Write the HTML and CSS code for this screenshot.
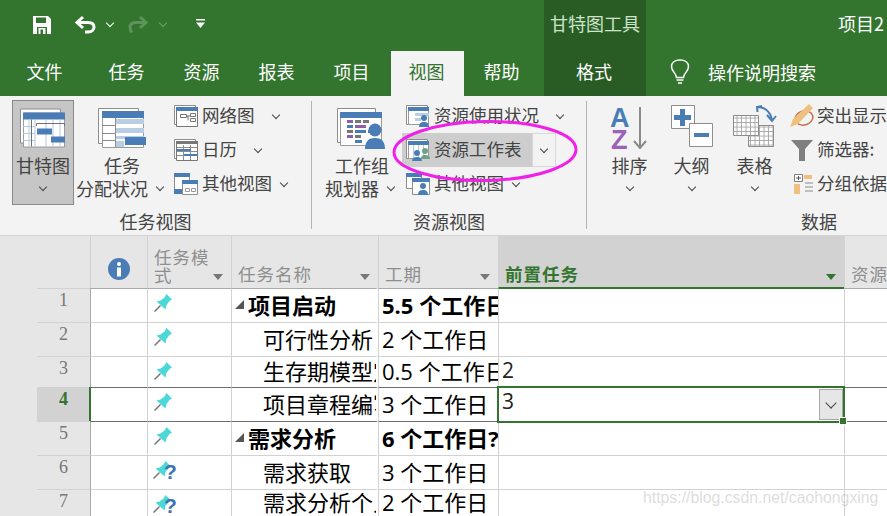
FILE: index.html
```html
<!DOCTYPE html>
<html lang="zh">
<head>
<meta charset="utf-8">
<title>甘特图工具</title>
<link rel="stylesheet" href="styles.css">
</head>
<body>
<div class="app">
  <header class="top">
    <div class="titlebar">
      <div class="qat">
        <svg class="q-save" width="20" height="20" viewBox="0 0 20 20"><path fill="#fff" d="M1 1h15l3 3v15H1z"/><path fill="#33752f" d="M4 2.500h10v5.500H4zM5 12h10v7H5z"/><path fill="#fff" d="M6.500 13h7v6h-7z"/><path fill="#33752f" d="M8.500 14.500h2.500v4.500H8.500z"/></svg>
        <svg class="q-undo" width="22" height="20" viewBox="0 0 22 20"><path fill="none" stroke="#fff" stroke-width="3" d="M9 2L3 7.500l6 5.500M3 7.500h11c4 0 6 2 6 4.500s-2 5-6 5h-3"/></svg>
        <span class="chev light q-c1"></span>
        <svg class="q-redo" width="22" height="20" viewBox="0 0 22 20"><path fill="none" stroke="#5d9459" stroke-width="3" d="M13 2l6 5.500-6 5.500M19 7.500H9c-4 0-6 2-6 5s1 4 2 5"/></svg>
        <span class="chev dim q-c2"></span>
        <svg class="q-more" width="9" height="9" viewBox="0 0 9 9"><path fill="#fff" d="M0 0h9v1.500H0zM0 3.500h9L4.500 9z"/></svg>
      </div>
      <div class="ctx-title">甘特图工具</div>
      <div class="doc-title">项目2</div>
    </div>
    <nav class="tabs">
      <span class="tab t-file">文件</span>
      <span class="tab t-std">任务</span>
      <span class="tab t-std">资源</span>
      <span class="tab t-std">报表</span>
      <span class="tab t-proj">项目</span>
      <span class="tab t-active">视图</span>
      <span class="tab t-help">帮助</span>
      <span class="tab t-ctx">格式</span>
      <span class="tell">
        <svg width="20" height="26" viewBox="0 0 20 26"><path fill="none" stroke="#fff" stroke-width="1.500" d="M6.500 18.500c0-4-5-6-5-11C1.500 3.500 5 1 10 1s8.500 2.500 8.500 6.500c0 5-5 7-5 11zM6.500 21h7M8 24h4"/></svg>
        <span>操作说明搜索</span>
      </span>
    </nav>
  </header>

  <section class="ribbon">
    <div class="group g-task">
      <div class="group-body">
        <div class="big big-gantt pressed">
          <svg width="46" height="40" viewBox="0 0 46 40"><path fill="#fff" stroke="#8d8d8d" d="M.500.500h40v34H.500z"/><path fill="#fff" stroke="#9a9a9a" d="M3.500 4.500h41v34h-41z"/><path fill="#4a7db5" d="M3 4h42v7H3z"/><path fill="none" stroke="#b7c9dd" d="M9 11v27M15 11v27M40 11v27M33 11v27M26 11v27M3 18h12M3 25h12M3 32h12"/><path fill="none" stroke="#707070" d="M11.500 11v27M16.500 17.500v-2.500h28v2.500"/><path fill="#4a7db5" d="M17 20h15v6H17zM31 28h14v6H31z"/></svg>
          <span class="lbl">甘特图</span>
          <span class="lbl"><i class="chev"></i></span>
        </div>
        <div class="big big-usage">
          <svg width="48" height="41" viewBox="0 0 48 41"><path fill="#fff" stroke="#8d8d8d" d="M.500.500h40v35H.500z"/><path fill="#fff" stroke="#9a9a9a" d="M4.500 3.500h41v36h-41z"/><path fill="#4a7db5" d="M4 3h42v7H4z"/><path fill="#b9cde3" d="M18 11h28v5H18zM18 20h28v5H18zM18 28h28v3H18zM18 33h8v6h-8z"/><path fill="none" stroke="#8d8d8d" d="M17.500 10v29M4 17.500h13M4 25.500h13M4 32.500h13"/><path fill="#4a7db5" d="M27 29h21v8H27z"/></svg>
          <span class="lbl">任务</span>
          <span class="lbl lbl-w">分配状况<i class="chev c-inline"></i></span>
        </div>
        <div class="small-col">
          <div class="small">
            <svg width="24" height="22" viewBox="0 0 24 22"><path fill="#fff" stroke="#8d8d8d" d="M.500.500h21v19H.500z"/><path fill="#fff" stroke="#777" d="M2.500 2.500h21v19h-21z"/><path fill="#4a7db5" d="M2 2h22v4H2z"/><path fill="none" stroke="#777" d="M6.500 9.500h6v3h-6zM16.500 8.500h5v3h-5zM16.500 13.500h5v3h-5zM12 11h4.500M14 10.500v5"/></svg>
            <span>网络图</span><i class="chev gap-wide"></i>
          </div>
          <div class="small">
            <svg width="24" height="22" viewBox="0 0 24 22"><path fill="#fff" stroke="#8d8d8d" d="M.500.500h21v19H.500z"/><path fill="#fff" stroke="#777" d="M2.500 2.500h21v19h-21z"/><path fill="#777" d="M2 2h22v3H2z"/><path fill="none" stroke="#8d8d8d" d="M3 8.500h20M3 12.500h20M3 16.500h20M9.500 6v15M16.500 6v15"/><path fill="#4a7db5" d="M3 10h14v2H3zM10 15h13v2H10z"/></svg>
            <span>日历</span><i class="chev gap-wide"></i>
          </div>
          <div class="small">
            <svg width="24" height="22" viewBox="0 0 24 22"><path fill="#fff" stroke="#8d8d8d" d="M.500.500h15v17H.500z"/><path fill="#4a7db5" d="M0 0h16v4H0zM0 16h11v5H0z"/><path fill="#fff" stroke="#8d8d8d" d="M8.500 8.500h15v13h-15z"/><path fill="#4a7db5" d="M8 7h16v4H8z"/><path fill="none" stroke="#9a9a9a" d="M11.500 15.500h4v3h-4zM17.500 15.500h4v3h-4z"/></svg>
            <span>其他视图</span><i class="chev gap-tight"></i>
          </div>
        </div>
      </div>
      <div class="group-label">任务视图</div>
    </div>
    <div class="sep"></div>

    <div class="group g-res">
      <div class="group-body">
        <div class="big big-team">
          <svg width="50" height="41" viewBox="0 0 50 41"><path fill="#fff" stroke="#8d8d8d" d="M.500.500h38v34H.500z"/><path fill="#fff" stroke="#9a9a9a" d="M3.500 4.500h41v33h-41z"/><path fill="#4a7db5" d="M3 4h42v6H3z"/><path fill="#8f5fae" d="M10 12h6v3h-6zM18 17h11v3H18zM10 27h6v3h-6z"/><path fill="#777" d="M18 12h6v3h-6zM26 12h6v3h-6zM10 22h6v3h-6zM18 27h6v3h-6z"/><path fill="#4a7db5" d="M10 17h6v3h-6zM18 22h11v3H18zM31 22h6v3h-6zM18 32h7v3h-7z"/><circle cx="38" cy="22" r="6.500" fill="#4a7db5"/><path fill="#4a7db5" d="M28 41c0-8 4-11 10-11s10 3 10 11z"/></svg>
          <span class="lbl">工作组</span>
          <span class="lbl lbl-w">规划器<i class="chev c-inline"></i></span>
        </div>
        <div class="small-col">
          <div class="small">
            <svg width="24" height="22" viewBox="0 0 24 22"><path fill="#fff" stroke="#8d8d8d" d="M.500.500h21v19H.500z"/><path fill="#fff" stroke="#9a9a9a" d="M2.500 2.500h20v17h-20z"/><path fill="#4a7db5" d="M2 2h21v4H2z"/><path fill="#b9cde3" d="M9 8h14v3H9zM9 13h6v3H9z"/><circle cx="18" cy="13" r="3" fill="#4a7db5"/><path fill="#4a7db5" d="M13 22c0-4 2-5 5-5s5 1 5 5z"/></svg>
            <span>资源使用状况</span><i class="chev gap-wide"></i>
          </div>
          <div class="small active-btn">
            <svg width="24" height="22" viewBox="0 0 24 22"><path fill="#fff" stroke="#8d8d8d" d="M.500.500h21v19H.500z"/><path fill="#fff" stroke="#9a9a9a" d="M2.500 2.500h20v17h-20z"/><path fill="#4a7db5" d="M2 2h21v4H2z"/><path fill="none" stroke="#b7c9dd" d="M7.500 6v14M12.500 6v14M17.500 6v14"/><circle cx="11" cy="14" r="3" fill="#4a7db5"/><path fill="#4a7db5" d="M6 23c0-4 2-5 5-5s5 1 5 5z"/><circle cx="19" cy="12" r="3" fill="#6fa08a"/><path fill="#6fa08a" d="M15 20c0-3 1-4 4-4s5 1 5 4z"/></svg>
            <span>资源工作表</span>
            <i class="split"><i class="chev"></i></i>
          </div>
          <div class="small">
            <svg width="24" height="22" viewBox="0 0 24 22"><path fill="#fff" stroke="#8d8d8d" d="M.500.500h15v15H.500z"/><path fill="#4a7db5" d="M0 0h16v4H0z"/><path fill="#fff" stroke="#8d8d8d" d="M6.500 6.500h17v15h-17z"/><path fill="#4a7db5" d="M6 5h18v4H6z"/><circle cx="17" cy="13" r="3" fill="#4a7db5"/><path fill="#4a7db5" d="M12 22c0-4 2-5 5-5s5 1 5 5z"/></svg>
            <span>其他视图</span><i class="chev gap-tight"></i>
          </div>
        </div>
      </div>
      <div class="group-label">资源视图</div>
    </div>
    <div class="sep"></div>

    <div class="group g-data">
      <div class="group-body">
        <div class="big big-sort">
          <svg width="40" height="44" viewBox="0 0 40 44"><text class="az a" x="0" y="22">A</text><text class="az z" x="1" y="44">Z</text><path fill="none" stroke="#8a8a8a" stroke-width="2" d="M30 2v41M24 36l6 7 6-7"/></svg>
          <span class="lbl">排序</span>
          <span class="lbl"><i class="chev"></i></span>
        </div>
        <div class="big big-outline">
          <svg width="42" height="44" viewBox="0 0 42 44"><path fill="#fff" stroke="#8d8d8d" d="M.500.500h23v23H.500z"/><path fill="#4a7db5" d="M9 4h5v6h6v5h-6v6H9v-6H3v-5h6z"/><path fill="#fff" stroke="#8d8d8d" d="M18.500 18.500h23v23h-23z"/><path fill="#4a7db5" d="M23 28h15v4H23z"/></svg>
          <span class="lbl">大纲</span>
          <span class="lbl"><i class="chev"></i></span>
        </div>
        <div class="big big-table">
          <svg width="44" height="44" viewBox="0 0 44 44"><defs><pattern id="gridp" width="4.500" height="4.500" patternUnits="userSpaceOnUse"><path fill="none" stroke="#a8a8a8" d="M4 0v5M0 4h5"/></pattern></defs><path fill="#fff" stroke="#8d8d8d" d="M15.500 20.500h25v21h-25z"/><path fill="url(#gridp)" d="M16 21h24v20H16z"/><path fill="#fff" stroke="#8d8d8d" d="M.500 10.500h25v20h-25z"/><path fill="url(#gridp)" d="M1 11h24v19H1z"/><path fill="none" stroke="#4a7db5" stroke-width="2" d="M25 2c5 0 12 3 14 13M24.500 7l-.500-5 5-1M34 10l5 6 4-5"/></svg>
          <span class="lbl">表格</span>
          <span class="lbl"><i class="chev"></i></span>
        </div>
        <div class="small-col">
          <div class="small">
            <svg width="24" height="24" viewBox="0 0 24 24"><ellipse cx="14" cy="14" rx="9" ry="7" fill="none" stroke="#c9694a" stroke-width="1.500" transform="rotate(-15 14 14)"/><path fill="#eec17e" d="M0 23l3-8L19 0l4 4L8 20z"/></svg>
            <span>突出显示</span>
          </div>
          <div class="small">
            <svg width="24" height="22" viewBox="0 0 24 22"><path fill="#7f7f7f" d="M1 1h22l-8 9v12h-6V10z"/></svg>
            <span>筛选器:</span>
          </div>
          <div class="small s-group">
            <svg width="20" height="20" viewBox="0 0 20 20"><path fill="#fff" stroke="#7f7f7f" d="M.500.500h8v7h-8z"/><path stroke="#555" fill="none" d="M2 4h5M4.500 2v4"/><path fill="#eec17e" d="M0 10h6v10H0zM10 1h8v4h-8z"/><path stroke="#8a8a8a" fill="none" d="M11 9h8M11 13h8M11 17h8"/></svg>
            <span>分组依据</span>
          </div>
        </div>
      </div>
      <div class="group-label">数据</div>
    </div>
  </section>

  <section class="sheet">
    <div class="h blank"></div>
    <div class="h h-info">
      <svg width="22" height="22" viewBox="0 0 22 22"><circle cx="11" cy="11" r="11" fill="#4a7db5"/><circle cx="11" cy="6" r="2" fill="#fff"/><path fill="#fff" d="M9 9.500h4v9H9z"/></svg>
    </div>
    <div class="h h-mode"><span>任务模式</span><i class="tri"></i></div>
    <div class="h"><span>任务名称</span><i class="tri"></i></div>
    <div class="h"><span>工期</span><i class="tri"></i></div>
    <div class="h h-sel"><span>前置任务</span><i class="tri"></i></div>
    <div class="h"><span>资源</span></div>

    <div class="num">1</div><div class="c lead t1"></div><div class="c ic t1"><svg class="pin" width="18" height="18" viewBox="0 0 18 18"><use href="#pin"/></svg></div>
    <div class="c nm b t1"><i class="caret"></i>项目启动</div><div class="c du b t1">5.5 个工作日?</div><div class="c pr first"></div><div class="c t1"></div>

    <div class="num">2</div><div class="c lead"></div><div class="c ic"><svg class="pin" width="18" height="18" viewBox="0 0 18 18"><use href="#pin"/></svg></div>
    <div class="c nm sub">可行性分析</div><div class="c du">2 个工作日</div><div class="c pr"></div><div class="c"></div>

    <div class="num">3</div><div class="c lead"></div><div class="c ic"><svg class="pin" width="18" height="18" viewBox="0 0 18 18"><use href="#pin"/></svg></div>
    <div class="c nm sub">生存期模型定义</div><div class="c du">0.5 个工作日</div><div class="c pr">2</div><div class="c"></div>

    <div class="num n-sel">4</div><div class="c sel s-first"></div><div class="c sel ic"><svg class="pin" width="18" height="18" viewBox="0 0 18 18"><use href="#pin"/></svg></div>
    <div class="c sel nm sub">项目章程编写</div><div class="c sel du">3 个工作日</div>
    <div class="c sel pr cur">3<i class="drop"><i class="chev"></i></i></div><div class="c sel"></div>

    <div class="num">5</div><div class="c aft lead"></div><div class="c aft ic"><svg class="pin" width="18" height="18" viewBox="0 0 18 18"><use href="#pin"/></svg></div>
    <div class="c aft nm b"><i class="caret"></i>需求分析</div><div class="c aft du b">6 个工作日?</div><div class="c aft pr"></div><div class="c aft"></div>

    <div class="num">6</div><div class="c lead"></div><div class="c ic"><span class="pinq"><svg class="pin" width="18" height="18" viewBox="0 0 18 18"><use href="#pin"/></svg><b>?</b></span></div>
    <div class="c nm sub">需求获取</div><div class="c du">3 个工作日</div><div class="c pr"></div><div class="c"></div>

    <div class="num">7</div><div class="c lead"></div><div class="c ic"><span class="pinq"><svg class="pin" width="18" height="18" viewBox="0 0 18 18"><use href="#pin"/></svg><b>?</b></span></div>
    <div class="c nm sub">需求分析个人</div><div class="c du">2 个工作日</div><div class="c pr"></div><div class="c"></div>
  </section>

  <svg class="defs" width="0" height="0"><defs><g id="pin"><path fill="none" stroke="#777" stroke-width="1.500" d="M.500 17.500l6-6"/><path fill="#4dd8d8" d="M12.500 0L18 5.500 15.500 7 12.500 11 11.500 15.500 2.500 7.500 6.500 6.500 10.500 3.500z"/></g></defs></svg>

  <svg class="ring" width="190" height="66" viewBox="0 0 190 66"><ellipse cx="95" cy="33" rx="91" ry="29.500" fill="none" stroke="#f11fe8" stroke-width="3" transform="rotate(-1 95 33)"/></svg>
  <div class="mark">https://blog.csdn.net/caohongxing</div>
</div>
</body>
</html>
```

FILE: styles.css
```css
* { box-sizing: border-box; }
html, body { margin: 0; padding: 0; }
body {
  width: 887px;
  height: 516px;
  overflow: hidden;
  background: #e6e6e6;
  font-family: "Noto Sans CJK SC", "Noto Sans", sans-serif;
  color: #444;
}
i { font-style: normal; }
.app { position: relative; width: 887px; height: 516px; overflow: hidden; }

/* title + tabs */
.top { background: #33752f; color: #fff; height: 96px; }
.titlebar { display: flex; height: 51px; font-size: 18px; }
.qat { width: 544px; display: flex; align-items: center; padding: 0 0 2px 32px; }
.q-undo { margin-left: 22px; }
.q-c1 { margin-left: 11px; }
.q-redo { margin-left: 14px; }
.q-c2 { margin-left: 11px; }
.q-more { margin-left: 30px; margin-top: -2px; }
.ctx-title { width: 102px; background: #285c24; color: #cde3ca; text-align: center; line-height: 47px; }
.doc-title { flex: 1; text-align: right; line-height: 47px; padding-right: 3px; white-space: nowrap; }

.tabs { display: flex; height: 45px; font-size: 18px; line-height: 40px; }
.tab { text-align: center; flex: none; }
.t-file { width: 89px; }
.t-std { width: 75px; }
.t-proj { width: 77px; padding-right: 2px; }
.t-active { width: 73px; background: #f3f3f3; color: #33752f; padding-right: 2px; }
.t-help { width: 80px; padding-right: 5px; }
.t-ctx { width: 102px; background: #285c24; padding-right: 2px; }
.tell { display: flex; align-items: center; margin-left: 24px; gap: 18px; height: 42px; }

/* ribbon */
.ribbon { display: flex; height: 140px; background: #f3f3f3; border-bottom: 1px solid #d4d4d4; font-size: 17.500px; overflow: hidden; }
.group { display: flex; flex-direction: column; flex: none; height: 139px; }
.g-task { width: 311px; }
.g-res { width: 274px; }
.g-data { width: 464px; }
.g-task .group-body { padding-left: 12px; }
.g-res .group-body { padding-left: 14px; }
.g-data .group-body { padding-left: 12px; }
.group-body { display: flex; flex: 1; min-height: 0; padding-top: 4px; }
.group-label { height: 25px; line-height: 22px; text-align: center; color: #444; font-size: 18px; }
.sep { flex: none; width: 1px; margin: 5px 0 6px; background: #b4b4b4; }

.big { display: flex; flex-direction: column; align-items: center; flex: none; height: 105px; padding-top: 8px; }
.big svg { height: 41px; flex: none; }
.lbl { display: flex; align-items: center; justify-content: center; height: 23px; line-height: 23px; white-space: nowrap; font-size: 18px; }
.big svg + .lbl { margin-top: 5px; }
.lbl-w { margin-right: 5px; }
.big-gantt { width: 62px; }
.pressed { background: #c6c6c6; border: 1px solid #8a8a8a; padding-top: 7px; }
.big-usage { width: 92px; margin: 0 2px; }
.big-team { width: 72px; margin-right: 4px; }
.big-sort { width: 61px; padding-top: 5px; }
.big-outline { width: 63px; padding-top: 5px; }
.big-table { width: 63px; padding-top: 5px; }
.big-sort svg, .big-outline svg, .big-table svg { height: 44px; margin-bottom: 0; }
.c-inline { margin-left: 9px; }

.small-col { display: flex; flex-direction: column; margin-top: -1px; }
.small { display: flex; align-items: center; height: 34px; padding-left: 4px; white-space: nowrap; }
.small span { margin-bottom: 3px; }
.small svg { flex: none; margin-right: 4px; }
.g-data .small svg { margin-right: 3px; }
.g-data .s-group svg { margin-left: 4px; }
.active-btn { background: #cdcdcd; width: 154px; height: 34px; }
.split { margin-left: auto; width: 24px; height: 34px; background: #f3f3f3; border: 1px solid #d8d8d8; display: flex; align-items: center; justify-content: center; }

.chev { display: inline-block; width: 6px; height: 6px; border-right: 1px solid #444; border-bottom: 1px solid #444; transform: rotate(45deg); margin-top: -3px; flex: none; }
.chev.light { border-color: #fff; }
.chev.dim { border-color: #6da369; }
.gap-wide { margin-left: 18px; }
.gap-tight { margin-left: 9px; }

.az { font-family: "Liberation Sans", sans-serif; font-weight: 700; font-size: 27px; }
.a { fill: #4a7db5; }
.z { fill: #9a62b8; }

/* sheet */
.sheet {
  display: grid;
  grid-template-columns: 90px 57px 84px 147px 120px 346px 43px;
  grid-template-rows: 52px 34px 34px 31px 34px 34px 34px 27px;
  height: 280px;
  background: #e6e6e6;
  color: #000;
  font-size: 22px;
}
.h {
  display: flex;
  align-items: flex-end;
  justify-content: space-between;
  background: #e6e6e6;
  border-left: 1px solid #d2d2d2;
  padding: 0 8px 4px 6px;
  font-size: 17.500px;
  line-height: 20px;
  letter-spacing: 1px;
  color: #8e8e8e;
  overflow: hidden;
  white-space: nowrap;
}
.blank { border-left: 0; }
.h-info { justify-content: center; align-items: center; padding: 14px 0 0; }
.h-mode { white-space: normal; line-height: 18px; }
.h-mode span { width: 56px; display: block; }
.h-sel { background: #d2d2d2; color: #33752f; font-weight: 700; border-bottom: 1px solid #33752f; padding-bottom: 3px; }
.tri { flex: none; width: 0; height: 0; border-left: 5px solid transparent; border-right: 5px solid transparent; border-top: 6px solid #777; margin-bottom: 4px; }
.h-sel .tri { border-top-color: #33752f; }

.num {
  margin-left: 37px;
  background: #e6e6e6;
  border-top: 1px solid #d2d2d2;
  font-family: "Liberation Serif", serif;
  font-size: 18px;
  color: #777;
  text-align: center;
  line-height: 22px;
}
.n-sel { background: #d2d2d2; color: #33752f; font-weight: 700; }

.c {
  border-top: 1px solid #d2d2d2;
  border-left: 1px solid #d2d2d2;
  overflow: hidden;
  white-space: nowrap;
  display: flex;
  align-items: center;
  background: #fff;
}
.t1 { border-top-color: #a9a9a9; }
.lead { border-left-color: #a9a9a9; }
.b { font-weight: 700; }
.nm { padding: 0 0 4px 3px; border-right: 2px solid #fff; }
.sub { padding-left: 31px; }
.du { padding: 0 0 4px 3px; font-family: "Open Sans", "Noto Sans CJK SC", sans-serif; }
.pr { padding-left: 3px; font-family: "Open Sans", sans-serif; font-size: 21px; color: #222; align-items: flex-start; line-height: 26px; }
.first { border-top: 1px solid #33752f; }
.ic { align-items: flex-start; padding: 5px 0 0 6px; }
.sel { border-top-color: #6e6e6e; }
.aft { border-top-color: #6e6e6e; }
.s-first { border-left: 2px solid #33752f; margin-left: -1px; }
.caret { flex: none; width: 0; height: 0; margin-right: 4px; border-left: 9px solid transparent; border-bottom: 9px solid #555; margin-top: 2px; }
.pinq { display: flex; align-items: flex-start; color: #3f72b0; }
.pinq b { font-family: "Liberation Sans", sans-serif; font-size: 21px; line-height: 20px; margin: 1px 0 0 -7px; }
.pinq .pin { margin-left: -1px; }

.cur { position: relative; overflow: visible; z-index: 1; justify-content: flex-start; }
.cur::before { content: ""; position: absolute; left: -2px; top: -2px; right: -1px; bottom: -2px; border: 2px solid #33752f; }
.cur::after { content: ""; position: absolute; right: -2px; bottom: -3px; width: 6px; height: 6px; background: #33752f; outline: 1px solid #fff; }
.drop { position: absolute; right: 1px; top: 1px; width: 24px; height: 31px; background: #e6e6e6; border: 1px solid #a8a8a8; display: flex; align-items: center; justify-content: center; }
.drop .chev { width: 8px; height: 8px; }

.defs { position: absolute; }
.ring { position: absolute; left: 390px; top: 118px; pointer-events: none; }
.mark {
  position: absolute;
  left: 643px;
  top: 488px;
  font-family: "Liberation Sans", sans-serif;
  font-size: 15.800px;
  line-height: 20px;
  color: rgba(150, 150, 150, 0.34);
  white-space: nowrap;
}
```
